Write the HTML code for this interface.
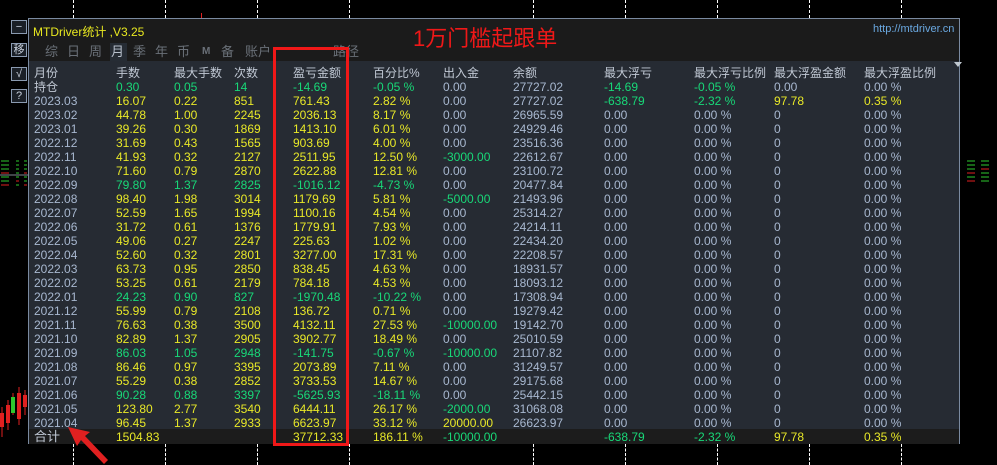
<!DOCTYPE html>
<html><head><meta charset="utf-8">
<style>
*{margin:0;padding:0;box-sizing:border-box}
body{width:997px;height:465px;background:#000;position:relative;overflow:hidden;font-family:"Liberation Sans","Noto Sans CJK SC",sans-serif;font-size:12px}
.a{position:absolute;white-space:nowrap}
.vl{position:absolute;width:0;border-left:1px dashed #fff}
#panel{position:absolute;left:28px;top:18px;width:932px;height:426px;border:1px solid #7a8aa0;background:#262b33}
#title{position:absolute;left:0;top:0;width:930px;height:42px;background:#1b1b1b}
.r{position:absolute;left:0;height:14px;width:930px}
.r span{position:absolute;top:0;line-height:14px}
.y{color:#e8e828}.g{color:#18d878}.b{color:#a8b8d0}.w{color:#c0c8d4}
.btn{position:absolute;left:11px;width:16px;height:14px;border:1px solid #8a9ab0;background:#1a1f26;color:#c8d0dc;font-size:11px;line-height:12px;text-align:center}
.tab{position:absolute;top:24px;color:#6a7078;font-size:13px;line-height:18px}
</style></head><body>
<div class="vl" style="left:73px;top:0;height:18px"></div>
<div class="vl" style="left:165px;top:0;height:18px"></div>
<div class="vl" style="left:257px;top:0;height:18px"></div>
<div class="vl" style="left:349px;top:0;height:18px"></div>
<div class="vl" style="left:533px;top:0;height:18px"></div>
<div class="vl" style="left:625px;top:0;height:18px"></div>
<div class="vl" style="left:717px;top:0;height:18px"></div>
<div class="vl" style="left:809px;top:0;height:18px"></div>
<div class="vl" style="left:901px;top:0;height:18px"></div>
<div class="vl" style="left:73px;top:444px;height:21px"></div>
<div class="vl" style="left:165px;top:444px;height:21px"></div>
<div class="vl" style="left:257px;top:444px;height:21px"></div>
<div class="vl" style="left:349px;top:444px;height:21px"></div>
<div class="vl" style="left:533px;top:444px;height:21px"></div>
<div class="vl" style="left:625px;top:444px;height:21px"></div>
<div class="vl" style="left:717px;top:444px;height:21px"></div>
<div class="vl" style="left:809px;top:444px;height:21px"></div>
<div class="vl" style="left:901px;top:444px;height:21px"></div>
<div class="a" style="left:201px;top:13px;width:1px;height:5px;background:#e02020"></div>
<svg class="a" style="left:0;top:160px" width="28" height="36">
<g stroke-width="1">
<line x1="1" y1="1" x2="9" y2="1" stroke="#2ec82e"/><line x1="16" y1="1" x2="19" y2="1" stroke="#2ec82e"/><line x1="24" y1="1" x2="27" y2="1" stroke="#2ec82e"/>
<line x1="1" y1="5" x2="9" y2="5" stroke="#2ec82e"/><line x1="16" y1="5" x2="19" y2="5" stroke="#2ec82e"/><line x1="24" y1="5" x2="27" y2="5" stroke="#2ec82e"/>
<line x1="1" y1="9" x2="9" y2="9" stroke="#2ec82e"/><line x1="16" y1="9" x2="19" y2="9" stroke="#2ec82e"/><line x1="24" y1="9" x2="27" y2="9" stroke="#2ec82e"/>
<line x1="1" y1="13" x2="9" y2="13" stroke="#e02020"/><line x1="16" y1="13" x2="19" y2="13" stroke="#2ec82e"/><line x1="24" y1="13" x2="27" y2="13" stroke="#e02020"/>
<line x1="0" y1="15" x2="28" y2="15" stroke="#808890"/>
<line x1="1" y1="17" x2="9" y2="17" stroke="#2ec82e"/><line x1="16" y1="17" x2="19" y2="17" stroke="#2ec82e"/><line x1="24" y1="17" x2="27" y2="17" stroke="#2ec82e"/>
<line x1="1" y1="21" x2="9" y2="21" stroke="#2ec82e"/><line x1="16" y1="21" x2="19" y2="21" stroke="#e02020"/><line x1="24" y1="21" x2="27" y2="21" stroke="#2ec82e"/>
<line x1="1" y1="25" x2="9" y2="25" stroke="#e02020"/><line x1="16" y1="25" x2="19" y2="25" stroke="#2ec82e"/><line x1="24" y1="25" x2="27" y2="25" stroke="#e02020"/>
</g></svg>
<svg class="a" style="left:965px;top:160px" width="32" height="36">
<g stroke-width="1">
<line x1="2" y1="1" x2="10" y2="1" stroke="#2ec82e"/><line x1="16" y1="1" x2="24" y2="1" stroke="#2ec82e"/>
<line x1="2" y1="5" x2="10" y2="5" stroke="#2ec82e"/><line x1="16" y1="5" x2="24" y2="5" stroke="#2ec82e"/>
<line x1="2" y1="9" x2="10" y2="9" stroke="#2ec82e"/><line x1="16" y1="9" x2="24" y2="9" stroke="#e02020"/>
<line x1="2" y1="13" x2="10" y2="13" stroke="#e02020"/><line x1="16" y1="13" x2="24" y2="13" stroke="#2ec82e"/>
<line x1="2" y1="17" x2="10" y2="17" stroke="#2ec82e"/><line x1="16" y1="17" x2="24" y2="17" stroke="#2ec82e"/>
<line x1="2" y1="21" x2="10" y2="21" stroke="#e02020"/><line x1="16" y1="21" x2="24" y2="21" stroke="#2ec82e"/>
</g></svg>
<svg class="a" style="left:0;top:385px" width="28" height="60">
<line x1="2" y1="22" x2="2" y2="52" stroke="#e02020"/><rect x="0" y="28" width="4" height="14" fill="#e02020"/>
<line x1="8" y1="15" x2="8" y2="45" stroke="#e02020"/><rect x="6" y="20" width="4" height="18" fill="#e02020"/>
<line x1="13" y1="8" x2="13" y2="30" stroke="#e02020"/><rect x="11" y="12" width="4" height="16" fill="#2ec82e"/>
<line x1="19" y1="2" x2="19" y2="40" stroke="#e02020"/><rect x="17" y="8" width="4" height="26" fill="#e02020"/>
<line x1="25" y1="5" x2="25" y2="30" stroke="#e02020"/><rect x="23" y="10" width="4" height="12" fill="#e02020"/>
</svg>
<div class="btn" style="top:20px">−</div>
<div class="btn" style="top:43px;font-size:11px">移</div>
<div class="btn" style="top:67px">√</div>
<div class="btn" style="top:89px">?</div>

<div id="panel">
<div id="title">
<div class="a" style="left:4px;top:4px;color:#e8e820;font-size:12px">MTDriver统计 ,V3.25</div>
<div class="a" style="left:844px;top:4px;color:#6aa8e0;font-size:11px">http://mtdriver.cn</div>
<div class="tab" style="left:16px">综</div>
<div class="tab" style="left:38px">日</div>
<div class="tab" style="left:60px">周</div>
<div class="a" style="left:81px;top:24px;width:17px;height:18px;background:#262c34"></div>
<div class="tab" style="left:82px;color:#b8c0cc">月</div>
<div class="tab" style="left:104px">季</div>
<div class="tab" style="left:126px">年</div>
<div class="tab" style="left:148px">币</div>
<div class="tab" style="left:173px;font-size:10px;font-weight:bold">M</div>
<div class="tab" style="left:192px">备</div>
<div class="tab" style="left:216px">账户</div>
<div class="tab" style="left:304px">路径</div>
</div>
<div class="a" style="left:925px;top:43px;width:0;height:0;border-left:4px solid transparent;border-right:4px solid transparent;border-top:5px solid #c0c8d0"></div>
<div id="rows"></div>
<div class="a" style="left:0;top:410px;width:930px;height:15px;background:#1c1c1c"></div>
<div class="r" style="top:411px">
<span class="w" style="left:5px;font-size:13px">合计</span>
<span class="y" style="left:87px">1504.83</span>
<span class="y" style="left:264px">37712.33</span>
<span class="y" style="left:344px">186.11 %</span>
<span class="g" style="left:414px">-10000.00</span>
<span class="g" style="left:575px">-638.79</span>
<span class="g" style="left:665px">-2.32 %</span>
<span class="y" style="left:745px">97.78</span>
<span class="y" style="left:835px">0.35 %</span>
</div>
</div>
<div class="a" style="left:273px;top:47px;width:76px;height:399px;border:3px solid #f01818"></div>
<div class="a" style="left:413px;top:26px;color:#f01818;font-size:22px;line-height:26px">1万门槛起跟单</div>
<svg class="a" style="left:60px;top:420px" width="60" height="45"><polygon points="8,7 30,12 25,16 48,40 44,44 21,20 17,26" fill="#e02020"/></svg>

<script>
var cols=[5,87,145,205,264,344,414,484,575,665,745,835];
var hdr=["月份","手数","最大手数","次数","盈亏金额","百分比%","出入金","余额","最大浮亏","最大浮亏比例","最大浮盈金额","最大浮盈比例"];
var d=[
["2023.03","16.07","0.22","851","761.43","2.82 %","0.00","27727.02","-638.79","-2.32 %","97.78","0.35 %"],
["2023.02","44.78","1.00","2245","2036.13","8.17 %","0.00","26965.59"],
["2023.01","39.26","0.30","1869","1413.10","6.01 %","0.00","24929.46"],
["2022.12","31.69","0.43","1565","903.69","4.00 %","0.00","23516.36"],
["2022.11","41.93","0.32","2127","2511.95","12.50 %","-3000.00","22612.67"],
["2022.10","71.60","0.79","2870","2622.88","12.81 %","0.00","23100.72"],
["2022.09","79.80","1.37","2825","-1016.12","-4.73 %","0.00","20477.84"],
["2022.08","98.40","1.98","3014","1179.69","5.81 %","-5000.00","21493.96"],
["2022.07","52.59","1.65","1994","1100.16","4.54 %","0.00","25314.27"],
["2022.06","31.72","0.61","1376","1779.91","7.93 %","0.00","24214.11"],
["2022.05","49.06","0.27","2247","225.63","1.02 %","0.00","22434.20"],
["2022.04","52.60","0.32","2801","3277.00","17.31 %","0.00","22208.57"],
["2022.03","63.73","0.95","2850","838.45","4.63 %","0.00","18931.57"],
["2022.02","53.25","0.61","2179","784.18","4.53 %","0.00","18093.12"],
["2022.01","24.23","0.90","827","-1970.48","-10.22 %","0.00","17308.94"],
["2021.12","55.99","0.79","2108","136.72","0.71 %","0.00","19279.42"],
["2021.11","76.63","0.38","3500","4132.11","27.53 %","-10000.00","19142.70"],
["2021.10","82.89","1.37","2905","3902.77","18.49 %","0.00","25010.59"],
["2021.09","86.03","1.05","2948","-141.75","-0.67 %","-10000.00","21107.82"],
["2021.08","86.46","0.97","3395","2073.89","7.11 %","0.00","31249.57"],
["2021.07","55.29","0.38","2852","3733.53","14.67 %","0.00","29175.68"],
["2021.06","90.28","0.88","3397","-5625.93","-18.11 %","0.00","25442.15"],
["2021.05","123.80","2.77","3540","6444.11","26.17 %","-2000.00","31068.08"],
["2021.04","96.45","1.37","2933","6623.97","33.12 %","20000.00","26623.97"]];
var h='';
function row(top,cells,cls){var s='<div class="r" style="top:'+top+'px">';for(var i=0;i<cells.length;i++){s+='<span class="'+cls[i]+'" style="left:'+cols[i]+'px">'+cells[i]+'</span>';}return s+'</div>';}
h+=row(47,hdr,hdr.map(function(){return 'w'}));
var hold=["持仓","0.30","0.05","14","-14.69","-0.05 %","0.00","27727.02","-14.69","-0.05 %","0.00","0.00 %"];
h+=row(61,hold,["w","g","g","g","g","g","b","b","g","g","b","b"]);
for(var k=0;k<d.length;k++){var r=d[k].slice();var neg=r[4].charAt(0)=='-';var c=neg?'g':'y';
var io=r[6];var ioc=io=="0.00"?'b':(io.charAt(0)=='-'?'g':'y');
var cls=['b',c,c,c,c,c,ioc,'b','b','b','b','b'];
if(k==0){cls[8]='g';cls[9]='g';cls[10]='y';cls[11]='y';}else{r.push("0.00","0.00 %","0","0.00 %");}
h+=row(75+k*14,r,cls);}
document.getElementById('rows').innerHTML=h;
</script>
</body></html>
